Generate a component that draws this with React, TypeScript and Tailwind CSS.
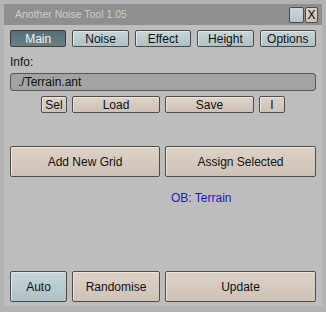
import React from 'react';

const font = { fontFamily: '"Liberation Sans", Arial, sans-serif' };

const beige =
  'bg-gradient-to-b from-[#ded2c6] to-[#cec1b5] border border-[#4c4c4c] rounded-[2px] text-[#111] shadow-[inset_1px_1px_0_#eee4da]';
const blue =
  'bg-gradient-to-b from-[#c6d6d9] to-[#aec1c5] border border-[#4c4c4c] rounded-[2px] text-[#111] shadow-[inset_1px_1px_0_#dde8ea]';
const active =
  'bg-gradient-to-b from-[#55707a] to-[#688186] border border-[#3c3c3c] rounded-[2px] text-[#f2f2f2]';

function Btn({ label, kind, className = '' }: { label: string; kind: 'beige' | 'blue' | 'active'; className?: string }) {
  const cls = kind === 'beige' ? beige : kind === 'blue' ? blue : active;
  return (
    <button className={`${cls} flex items-center justify-center text-[12px] leading-none ${className}`}>
      {label}
    </button>
  );
}

export default function App() {
  return (
    <div className="w-[326px] h-[312px] bg-[#b3b3b3] pt-[4px] px-[4px] pb-[6px] flex flex-col" style={font}>
      {/* header */}
      <div className="h-[21px] bg-[#8f8f8f] flex items-center pl-[11px] pr-[4px]">
        <span className="text-[10.5px] text-[#cdcdcd] flex-1">Another Noise Tool 1.05</span>
        <div className="w-[15px] h-[16px] bg-gradient-to-b from-[#c9d9dc] to-[#b2c5c9] border border-[#4c4c4c] rounded-[2px]" />
        <div className="w-[13px] h-[16px] ml-[1px] bg-gradient-to-b from-[#ded2c6] to-[#cec1b5] border border-[#4c4c4c] rounded-[2px] flex items-center justify-center text-[12px] leading-none">
          X
        </div>
      </div>

      {/* body */}
      <div className="flex-1 bg-[#bdbdbd] px-[6px] flex flex-col">
        <div className="grid grid-cols-5 gap-[6px] mt-[5px] h-[17px]">
          <Btn label="Main" kind="active" />
          <Btn label="Noise" kind="blue" />
          <Btn label="Effect" kind="blue" />
          <Btn label="Height" kind="blue" />
          <Btn label="Options" kind="blue" />
        </div>

        <div className="text-[12px] leading-none text-[#111] mt-[9px] h-[13px]">Info:</div>

        <div className="mt-[4px] h-[18px] bg-[#a3a3a3] border border-[#555] rounded-[3px] flex items-center pl-[7px] text-[12px] text-[#111] leading-none">
          ./Terrain.ant
        </div>

        <div className="flex gap-[5px] mt-[5px] h-[17px] pl-[31px]">
          <Btn label="Sel" kind="beige" className="w-[26px]" />
          <Btn label="Load" kind="beige" className="w-[88px]" />
          <Btn label="Save" kind="beige" className="w-[89px]" />
          <Btn label="I" kind="beige" className="w-[26px]" />
        </div>

        <div className="flex gap-[5px] mt-[33px] h-[31px]">
          <Btn label="Add New Grid" kind="beige" className="w-[150px]" />
          <Btn label="Assign Selected" kind="beige" className="flex-1" />
        </div>

        <div className="mt-[15px] pl-[161px] text-[12px] leading-none text-[#1a1ac8]">OB: Terrain</div>

        <div className="flex-1" />

        <div className="flex gap-[5px] h-[31px] mb-[4px]">
          <Btn label="Auto" kind="blue" className="w-[57px]" />
          <Btn label="Randomise" kind="beige" className="w-[88px]" />
          <Btn label="Update" kind="beige" className="flex-1" />
        </div>
      </div>
    </div>
  );
}
